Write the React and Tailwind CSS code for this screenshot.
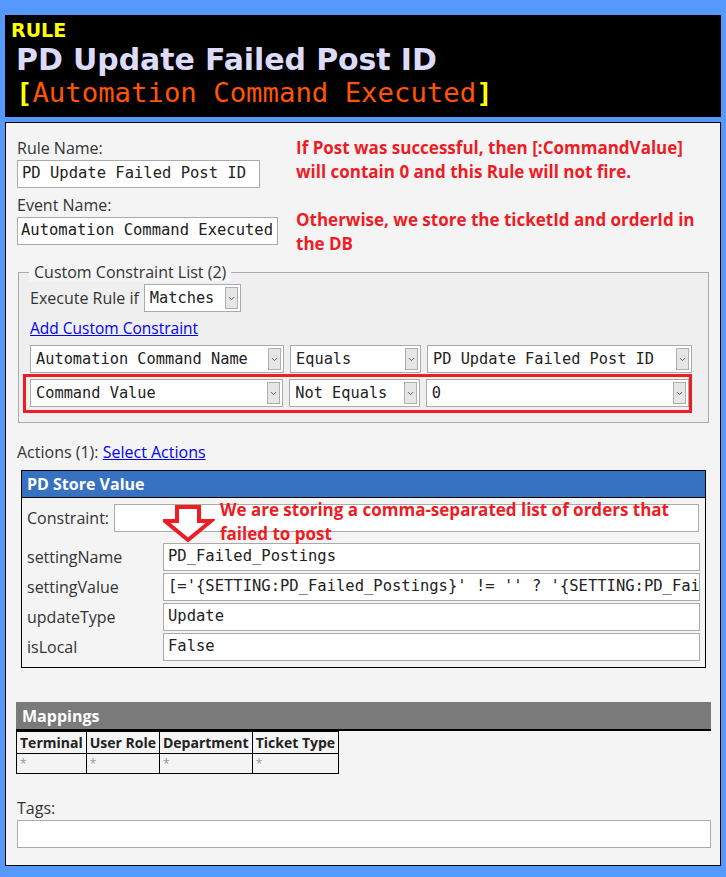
import { ChevronDown } from "lucide-react";

const ui = { fontFamily: '"Open Sans", "Noto Sans", sans-serif' };
const mono = { fontFamily: '"DejaVu Sans Mono", "Liberation Mono", monospace' };

const Select = ({ value, width }) => (
  <div
    className="relative flex items-center h-[28px] bg-white border border-[#aaaaaa] pl-[5px]"
    style={{ width }}
  >
    <span className="text-[15.3px] text-[#222]" style={mono}>
      {value}
    </span>
    <div className="absolute right-[2px] top-[2px] bottom-[2px] w-[13px] border border-[#adadad] bg-[#e6e6e6] flex items-center justify-center">
      <ChevronDown size={9} strokeWidth={2.5} className="text-[#555]" />
    </div>
  </div>
);

const Field = ({ label, value }) => (
  <div className="flex items-center h-[28px] mt-[2px]">
    <span className="w-[136px] whitespace-nowrap text-[16px] text-[#333]">{label}</span>
    <div
      className="flex-1 h-[28px] bg-white border border-[#aaaaaa] pl-[4px] flex items-center overflow-hidden whitespace-nowrap text-[15.5px] text-[#222]"
      style={mono}
    >
      {value}
    </div>
  </div>
);

export default function App() {
  return (
    <div className="min-h-[877px] bg-[#5599fe] px-[5px] pt-[15px] pb-[15px]" style={ui}>
      {/* header */}
      <div className="bg-black h-[102px] pl-[6px] pt-[3px]" style={{ fontFamily: '"DejaVu Sans", Verdana, sans-serif' }}>
        <div className="text-[#ffff00] font-bold text-[19px] leading-[24px]">RULE</div>
        <div className="text-[#dcdcfa] font-bold text-[30px] leading-[36px] pl-[5px] tracking-[-0.1px]">
          PD Update Failed Post ID
        </div>
        <div className="text-[27.3px] leading-[32px] pl-[5px] -mt-[1px]" style={mono}>
          <span className="text-[#ffff00] font-bold">[</span>
          <span className="text-[#ff5500]">Automation Command Executed</span>
          <span className="text-[#ffff00] font-bold">]</span>
        </div>
      </div>

      {/* body */}
      <div className="mt-[5px] bg-[#f4f4f4] border border-black pl-[11px] pr-[9px] pt-[14px] pb-[17px]">
        <div className="flex">
          <div className="w-[279px]">
            <div className="text-[16px] leading-[22px] text-[#333]">Rule Name:</div>
            <div className="mt-[1px] w-[243px] h-[28px] bg-white border border-[#aaaaaa] pl-[4px] flex items-center text-[15.5px] text-[#222]" style={mono}>
              PD Update Failed Post ID
            </div>
            <div className="mt-[6px] text-[16px] leading-[22px] text-[#333]">Event Name:</div>
            <div className="mt-[1px] w-[261px] h-[28px] bg-white border border-[#aaaaaa] pl-[3px] flex items-center text-[15.5px] text-[#222] whitespace-nowrap overflow-hidden" style={mono}>
              Automation Command Executed
            </div>
          </div>
          <div className="text-[#ee1c25] font-bold text-[17px] leading-[24px] -mt-[1px]">
            <div>If Post was successful, then [:CommandValue]</div>
            <div>will contain 0 and this Rule will not fire.</div>
            <div className="h-[24px]" />
            <div>Otherwise, we store the ticketId and orderId in</div>
            <div>the DB</div>
          </div>
        </div>

        {/* constraints */}
        <fieldset className="mt-[6px] ml-[1px] mr-[2px] border border-[#aaaaaa] bg-[#efefef] pl-[4px] pr-[14px] pb-[9px]">
          <legend className="ml-[6px] px-[5px] bg-[#f4f4f4] text-[16px] leading-[20px] text-[#333]">
            Custom Constraint List (2)
          </legend>
          <div className="flex items-center gap-[5px] pl-[7px] mt-[2px]">
            <span className="text-[16px] text-[#333]">Execute Rule if</span>
            <Select value="Matches" width="97px" />
          </div>
          <div className="pl-[7px] mt-[4px] text-[15.5px] leading-[24px]">
            <span className="text-[#0000ee] underline">Add Custom Constraint</span>
          </div>
          <div className="flex pl-[7px] mt-[5px] gap-[6px]">
            <Select value="Automation Command Name" width="254px" />
            <Select value="Equals" width="131px" />
            <Select value="PD Update Failed Post ID" width="265px" />
          </div>
          <div className="mt-[1px] border-[3px] border-[#ee1c25] pl-[4px] pt-[2px] pb-[3px] flex gap-[6px] w-[669px]">
            <Select value="Command Value" width="254px" />
            <Select value="Not Equals" width="131px" />
            <Select value="0" width="264px" />
          </div>
        </fieldset>

        {/* actions */}
        <div className="mt-[18px] text-[16px] leading-[22px] text-[#333]">
          Actions (1): <span className="text-[#0000ee] underline">Select Actions</span>
        </div>
        <div className="relative mt-[7px] ml-[4px] mr-[5px] border border-black pb-[6px]">
          <div className="bg-[#3672c1] h-[27px] flex items-center pl-[5px] text-white font-bold text-[16px] border-b border-black">
            PD Store Value
          </div>
          <div className="px-[5px] pt-[6px]">
            <div className="flex items-center h-[28px]">
              <span className="w-[87px] whitespace-nowrap text-[16px] text-[#333]">Constraint:</span>
              <div className="flex-1 h-[28px] bg-white border border-[#aaaaaa] mr-[1px]" />
            </div>
            <div className="mt-[11px]">
              <Field label="settingName" value="PD_Failed_Postings" />
              <Field label="settingValue" value="[='{SETTING:PD_Failed_Postings}' != '' ? '{SETTING:PD_Fai" />
              <Field label="updateType" value="Update" />
              <Field label="isLocal" value="False" />
            </div>
          </div>
          {/* annotation */}
          <svg className="absolute left-[141px] top-[34px]" width="52" height="38" viewBox="0 0 52 38">
            <path
              d="M14 2 H36 V16 H48 L25 35 L2 16 H14 Z"
              fill="white"
              stroke="#ee1c25"
              strokeWidth="4"
              strokeLinejoin="miter"
            />
          </svg>
          <div className="absolute left-[198px] top-[27px] text-[#ee1c25] font-bold text-[17px] leading-[24px] whitespace-nowrap">
            <div>We are storing a comma-separated list of orders that</div>
            <div>failed to post</div>
          </div>
        </div>

        {/* mappings */}
        <div className="mt-[34px] -ml-[1px] bg-[#7a7a7a] h-[29px] border-b-[2px] border-black flex items-center pl-[6px] text-white font-bold text-[16px]">
          Mappings
        </div>
        <table className="-ml-[1px] border-collapse text-[14px] text-[#222]">
          <thead>
            <tr className="h-[22px]">
              {["Terminal", "User Role", "Department", "Ticket Type"].map((h) => (
                <th key={h} className="border border-black px-[3px] font-bold text-left leading-[20px] whitespace-nowrap">
                  {h}
                </th>
              ))}
            </tr>
          </thead>
          <tbody>
            <tr className="h-[20px]">
              {[0, 1, 2, 3].map((i) => (
                <td key={i} className="border border-black px-[3px] text-[#999] text-[12px] leading-[18px]">
                  *
                </td>
              ))}
            </tr>
          </tbody>
        </table>

        {/* tags */}
        <div className="mt-[23px] text-[16px] leading-[22px] text-[#333]">Tags:</div>
        <div className="mt-[1px] h-[28px] bg-white border border-[#aaaaaa]" />
      </div>
    </div>
  );
}
